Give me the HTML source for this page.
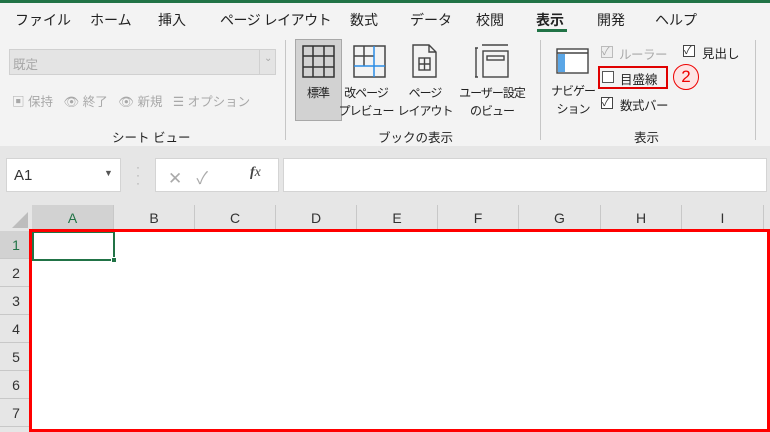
<!DOCTYPE html>
<html><head><meta charset="utf-8"><style>
*{margin:0;padding:0;box-sizing:border-box}
body{width:770px;height:432px;overflow:hidden;background:#e6e6e6;font-family:"Liberation Sans","Noto Sans CJK JP",sans-serif;position:relative;color:#333}
.a{position:absolute;white-space:nowrap}
.t{font-size:14px;color:#222;top:10px}
.s{font-size:12.5px;color:#222}
.c{font-size:12px;color:#222;letter-spacing:-1px;line-height:18px;text-align:center;transform:translateX(-50%)}
.g{color:#a8a8a8;font-size:12.5px}
.cb{position:absolute;width:12px;height:12px;border:1px solid #444;background:#fff}
.ch{position:absolute;top:205px;height:26px;border-right:1px solid #c8c8c8;font-size:14px;text-align:center;line-height:26px;color:#333}
.rh{position:absolute;left:0;width:32px;height:28px;border-bottom:1px solid #c8c8c8;font-size:14px;text-align:center;line-height:28px;color:#333;background:#e6e6e6}
</style></head><body>
<div class="a" style="left:0;top:0;width:770px;height:3px;background:#217346"></div>
<div class="a" style="left:0;top:3px;width:770px;height:143px;background:#f3f3f3"></div>
<div class="a t" style="left:15px">ファイル</div>
<div class="a t" style="left:90px">ホーム</div>
<div class="a t" style="left:158px">挿入</div>
<div class="a t" style="left:220px;letter-spacing:-0.5px">ページ レイアウト</div>
<div class="a t" style="left:350px">数式</div>
<div class="a t" style="left:410px">データ</div>
<div class="a t" style="left:476px">校閲</div>
<div class="a t" style="left:536px;font-weight:bold">表示</div>
<div class="a" style="left:537px;top:29px;width:30px;height:3px;background:#217346"></div>
<div class="a t" style="left:597px">開発</div>
<div class="a t" style="left:655px">ヘルプ</div>
<!-- sheet view -->
<div class="a" style="left:9px;top:49px;width:267px;height:26px;background:#e4e4e4;border:1px solid #d0d0d0"></div>
<div class="a g" style="left:13px;top:54px">既定</div>
<div class="a" style="left:259px;top:50px;width:1px;height:24px;background:#d0d0d0"></div>
<div class="a g" style="left:264px;top:53px;font-size:10px">⌄</div>
<div class="a g" style="left:12px;top:91px">▣ 保持 &nbsp;&nbsp;👁 終了 &nbsp;&nbsp;👁 新規 &nbsp;&nbsp;☰ オプション</div>
<div class="a s" style="left:112px;top:127px">シート ビュー</div>
<div class="a" style="left:285px;top:40px;width:1px;height:100px;background:#c6c6c6"></div>
<!-- workbook views -->
<div class="a" style="left:295px;top:39px;width:47px;height:82px;background:#d2d2d2;border:1px solid #a8a8a8"></div>
<svg class="a" style="left:302px;top:45px" width="34" height="34"><g fill="none" stroke="#333" stroke-width="1.5"><rect x="1" y="1" width="31" height="31"/><path d="M11 1v31M22 1v31M1 11h31M1 22h31"/></g></svg>
<div class="a c" style="left:318px;top:84px">標準</div>
<svg class="a" style="left:353px;top:45px" width="34" height="34"><g fill="none" stroke-width="1.5"><rect x="1" y="1" width="31" height="31" stroke="#444"/><path d="M1 11h20M11 1v20" stroke="#444"/><path d="M21 1v31M1 21h31" stroke="#2b8ce6"/></g></svg>
<div class="a c" style="left:366px;top:84px">改ページ<br>プレビュー</div>
<svg class="a" style="left:412px;top:44px" width="26" height="34"><g fill="none" stroke="#444" stroke-width="1.4"><path d="M1 1h16l7 7v25H1z M17 1v7h7"/><rect x="7" y="14" width="11" height="12"/><path d="M7 20h11M12.5 14v12"/></g></svg>
<div class="a c" style="left:425px;top:84px">ページ<br>レイアウト</div>
<svg class="a" style="left:475px;top:44px" width="34" height="34"><g fill="none" stroke="#444" stroke-width="1.4"><path d="M7 1h26M1 4v29M0 4h3M0 33h3"/><rect x="8" y="7" width="25" height="26"/><rect x="12" y="12" width="17" height="4"/></g></svg>
<div class="a c" style="left:492px;top:84px">ユーザー設定<br>のビュー</div>
<div class="a s" style="left:378px;top:127px">ブックの表示</div>
<div class="a" style="left:540px;top:40px;width:1px;height:100px;background:#c6c6c6"></div>
<!-- show -->
<svg class="a" style="left:556px;top:48px" width="33" height="26"><rect x="1" y="1" width="31" height="24" fill="#fff" stroke="#444" stroke-width="1.4"/><path d="M1 5h31" stroke="#444" stroke-width="1.4"/><rect x="2" y="6" width="7" height="18" fill="#5aa6e6"/></svg>
<div class="a c" style="left:573px;top:82px">ナビゲー<br>ション</div>
<div class="cb" style="left:601px;top:46px;border-color:#bbb;background:#eee"></div>
<div class="a g" style="left:602px;top:43px;font-size:11px">✓</div>
<div class="a g" style="left:619px;top:44px;letter-spacing:-0.5px">ルーラー</div>
<div class="cb" style="left:683px;top:45px"></div>
<div class="a" style="left:684px;top:42px;font-size:11px">✓</div>
<div class="a s" style="left:702px;top:43px">見出し</div>
<div class="a" style="left:598px;top:66px;width:70px;height:23px;border:2px solid #e00000"></div>
<div class="cb" style="left:602px;top:71px;border-color:#555"></div>
<div class="a s" style="left:620px;top:69px">目盛線</div>
<div class="a" style="left:673px;top:64px;width:26px;height:26px;border-radius:50%;border:1px solid #e00;background:#fde4e4;color:#e00;text-align:center;font-size:17px;line-height:24px">2</div>
<div class="cb" style="left:601px;top:97px"></div>
<div class="a" style="left:602px;top:94px;font-size:11px">✓</div>
<div class="a s" style="left:620px;top:95px;letter-spacing:-0.5px">数式バー</div>
<div class="a s" style="left:634px;top:127px">表示</div>
<div class="a" style="left:755px;top:40px;width:1px;height:100px;background:#c6c6c6"></div>
<!-- formula bar -->
<div class="a" style="left:6px;top:158px;width:115px;height:34px;background:#fff;border:1px solid #d4d4d4"></div>
<div class="a" style="left:14px;top:167px;font-size:15px;color:#333">A1</div>
<div class="a" style="left:104px;top:168px;font-size:9px;color:#555">▼</div>
<div class="a" style="left:136px;top:163px;font-size:12px;color:#aaa;line-height:8px">·<br>·<br>·</div>
<div class="a" style="left:155px;top:158px;width:124px;height:34px;background:#fff;border:1px solid #d4d4d4"></div>
<div class="a" style="left:168px;top:164px;font-size:17px;color:#aaa">✕ &nbsp; ✓</div>
<div class="a" style="left:250px;top:165px;font-size:14px;font-style:italic;font-family:'Liberation Serif',serif;color:#444"><b>f</b>x</div>
<div class="a" style="left:283px;top:158px;width:484px;height:34px;background:#fff;border:1px solid #d4d4d4"></div>
<!-- grid -->
<div class="a" style="left:0;top:205px;width:32px;height:26px;background:#e6e6e6"></div>
<svg class="a" style="left:10px;top:210px" width="20" height="20"><path d="M18 2V18H2z" fill="#bdbdbd"/></svg>
<div class="ch" style="left:32px;width:82px;background:#d2d2d2;color:#217346">A</div>
<div class="ch" style="left:114px;width:81px">B</div>
<div class="ch" style="left:195px;width:81px">C</div>
<div class="ch" style="left:276px;width:81px">D</div>
<div class="ch" style="left:357px;width:81px">E</div>
<div class="ch" style="left:438px;width:81px">F</div>
<div class="ch" style="left:519px;width:82px">G</div>
<div class="ch" style="left:601px;width:81px">H</div>
<div class="ch" style="left:682px;width:82px">I</div>
<div class="a" style="left:32px;top:231px;width:738px;height:201px;background:#fff"></div>
<div class="rh" style="top:231px;background:#d2d2d2;color:#217346">1</div>
<div class="rh" style="top:259px">2</div>
<div class="rh" style="top:287px">3</div>
<div class="rh" style="top:315px">4</div>
<div class="rh" style="top:343px">5</div>
<div class="rh" style="top:371px">6</div>
<div class="rh" style="top:399px">7</div>
<div class="a" style="left:32px;top:231px;width:83px;height:30px;border:2px solid #217346"></div>
<div class="a" style="left:111px;top:257px;width:6px;height:6px;background:#217346;border:1px solid #fff"></div>
<div class="a" style="left:29px;top:229px;width:741px;height:203px;border:3px solid #f00"></div>
</body></html>
